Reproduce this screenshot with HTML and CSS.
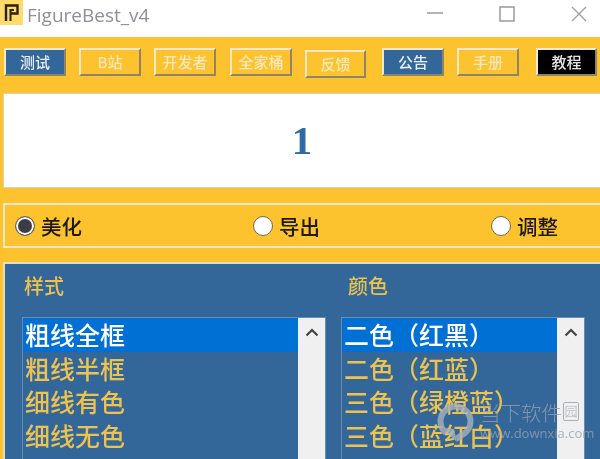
FILE: index.html
```html
<!DOCTYPE html>
<html lang="zh">
<head>
<meta charset="utf-8">
<title>FigureBest_v4</title>
<link rel="stylesheet" href="styles.css">
</head>
<body>
<div class="window">
  <header class="titlebar">
    <svg class="app-icon" width="23" height="25" viewBox="0 0 23 25">
      <rect width="23" height="25" fill="#fedb6b"/>
      <path d="M6 21V5.5H17.5V13.5H11" fill="none" stroke="#2a2411" stroke-width="2.4"/>
      <path d="M10.5 21V10H14" fill="none" stroke="#2a2411" stroke-width="2"/>
    </svg>
    <span class="app-title">FigureBest_v4</span>
    <div class="controls">
      <svg width="16" height="16" viewBox="0 0 16 16"><path d="M0 7H16" stroke="#a0a0a0" stroke-width="1.6"/></svg>
      <svg width="16" height="16" viewBox="0 0 16 16"><rect x="1" y="1" width="14" height="14" fill="none" stroke="#a0a0a0" stroke-width="1.6"/></svg>
      <svg width="16" height="16" viewBox="0 0 16 16"><path d="M1 1L15 15M15 1L1 15" stroke="#a0a0a0" stroke-width="1.4"/></svg>
    </div>
  </header>
  <main class="body">
    <nav class="toolbar">
      <button class="btn btn-blue">测试</button>
      <button class="btn btn-b">B站</button>
      <button class="btn btn-dev">开发者</button>
      <button class="btn btn-all">全家桶</button>
      <button class="btn btn-low">反馈</button>
      <button class="btn btn-blue btn-notice">公告</button>
      <button class="btn btn-manual">手册</button>
      <button class="btn btn-black">教程</button>
    </nav>
    <section class="banner">1</section>
    <section class="modes">
      <label class="mode"><span class="radio radio-on"></span>美化</label>
      <label class="mode"><span class="radio"></span>导出</label>
      <label class="mode"><span class="radio"></span>调整</label>
    </section>
    <section class="panel">
      <div class="col col-left">
        <h2 class="col-title">样式</h2>
        <div class="listbox">
          <ul class="items">
            <li class="item item-sel">粗线全框</li>
            <li class="item">粗线半框</li>
            <li class="item">细线有色</li>
            <li class="item">细线无色</li>
          </ul>
          <div class="scrollbar"><svg width="14" height="9" viewBox="0 0 14 9"><path d="M1.5 7.5L7 2L12.5 7.5" fill="none" stroke="#444" stroke-width="2.2"/></svg></div>
        </div>
      </div>
      <div class="col col-right">
        <h2 class="col-title col-title-right">颜色</h2>
        <div class="listbox">
          <ul class="items">
            <li class="item item-sel">二色（红黑）</li>
            <li class="item">二色（红蓝）</li>
            <li class="item">三色（绿橙蓝）</li>
            <li class="item">三色（蓝红白）</li>
          </ul>
          <div class="scrollbar"><svg width="14" height="9" viewBox="0 0 14 9"><path d="M1.5 7.5L7 2L12.5 7.5" fill="none" stroke="#444" stroke-width="2.2"/></svg></div>
        </div>
      </div>
    </section>
  </main>
  <div class="watermark">
    <svg class="wm-logo" width="38" height="40" viewBox="0 0 38 40"><path d="M9 30A15 15 0 1 1 28 30L19 36" fill="none" stroke="#a9b2bc" stroke-width="6"/><path d="M3 24L20 39L17 26Z" fill="#a9b2bc"/></svg>
    <span class="wm-name">当下软件</span>
    <span class="wm-box">园</span>
    <span class="wm-url">www.downxia.com</span>
  </div>
</div>
</body>
</html>
```
FILE: styles.css
```css
* { box-sizing: border-box; }
html, body { margin: 0; padding: 0; }
body {
  width: 600px;
  height: 459px;
  overflow: hidden;
  background: #fff;
  font-family: "Noto Sans CJK SC", "Noto Sans", sans-serif;
}
.window { position: relative; width: 600px; height: 459px; overflow: hidden; display: flex; flex-direction: column; filter: blur(.5px); }
.titlebar { height: 37px; flex: none; display: flex; align-items: flex-start; background: #fff; }
.app-icon { flex: none; }
.app-title {
  margin: 2px 0 0 4px;
  font: 19px/26px "Open Sans", "Noto Sans", sans-serif;
  color: #8f8f96;
}
.controls { margin-left: auto; display: flex; gap: 56px; padding: 6px 13px 0 0; }
.body { flex: 1; min-height: 0; background: #fdc32f; padding: 11px 0 0 3px; display: flex; flex-direction: column; }
.toolbar { height: 45px; flex: none; display: flex; align-items: flex-start; padding-left: 1px; }
.btn {
  width: 62px; height: 28px; padding: 0; flex: none;
  border: 2px solid; border-color: #f5e9c9 #8f8468 #8f8468 #f5e9c9;
  background: #fdc32f; color: #f7e7bd;
  font: 500 15px/22px "Noto Sans CJK SC", sans-serif;
}
.btn-blue { background: #336699; color: #e8eef4; }
.btn-b { margin-left: 13px; }
.btn-dev { margin-left: 13px; }
.btn-all { margin-left: 14px; }
.btn-low { margin: 2px 0 0 13px; width: 61px; }
.btn-notice { margin-left: 16px; }
.btn-manual { margin-left: 13px; }
.btn-black { background: #000; color: #e6e6e6; width: 61px; margin-left: 17px; }
.banner {
  height: 95px; flex: none;
  background: #fff; border: 1px solid #d9d2bb; border-right: 0;
  display: flex; align-items: center; justify-content: center;
  font: 700 41px/1 "Liberation Serif", serif; color: #2f6aa5;
}
.modes {
  height: 45px; flex: none; margin-top: 15px;
  border: 2px solid #ece5d0; border-right: 0;
  display: flex; align-items: center; padding-left: 10px;
  font: 500 20.5px/26px "Noto Sans CJK SC", sans-serif; color: #1c1a12;
}
.mode { display: flex; align-items: center; gap: 6px; width: 238px; flex: none; }
.radio { width: 20px; height: 20px; border-radius: 50%; background: #fff; border: 1px solid #6f6a55; flex: none; display: block; }
.radio-on { background: #3c3c44; box-shadow: inset 0 0 0 2px #fff; }
.panel {
  flex: 1; min-height: 0; margin-top: 14px;
  background: #336699; border: 2px solid #e6dcc0; border-right: 0; border-bottom: 0;
  display: flex; padding: 0 15px 0 17px;
}
.col { display: flex; flex-direction: column; }
.col-left { width: 304px; margin-right: 15px; }
.col-right { width: 244px; }
.col-title { margin: 8px 0 17px 2px; font: 500 20px/28px "Noto Sans CJK SC", sans-serif; color: #edc24e; height: 28px; }
.col-title-right { margin-left: 7px; }
.listbox { flex: 1; display: flex; border: 1px solid #6a8bb0; border-bottom: 0; overflow: hidden; min-height: 0; }
.items { flex: 1; list-style: none; margin: 0; padding: 0; }
.item { height: 33.5px; padding-left: 2px; font: 500 25px/33.5px "Noto Sans CJK SC", sans-serif; color: #edc24e; white-space: nowrap; }
.item-sel { background: #0070d4; color: #fff; }
.scrollbar { width: 27px; flex: none; background: #f0f0f0; display: flex; justify-content: center; padding-top: 10px; align-items: flex-start; }
.watermark { position: absolute; left: 437px; top: 398px; width: 163px; height: 61px; color: rgba(150,160,172,.8); }
.wm-logo { position: absolute; left: 0; top: 5px; opacity: .8; }
.wm-name { position: absolute; left: 43px; top: -1px; font: 300 20.5px/30px "Noto Sans CJK SC", sans-serif; white-space: nowrap; }
.wm-box { position: absolute; left: 126px; top: 4px; width: 16px; height: 19px; border: 1.5px solid currentColor; border-radius: 2px; font: 300 13px/16px "Noto Sans CJK SC", sans-serif; text-align: center; }
.wm-url { position: absolute; left: 43px; top: 26px; font: 13px/18px "Open Sans", sans-serif; white-space: nowrap; }
```
